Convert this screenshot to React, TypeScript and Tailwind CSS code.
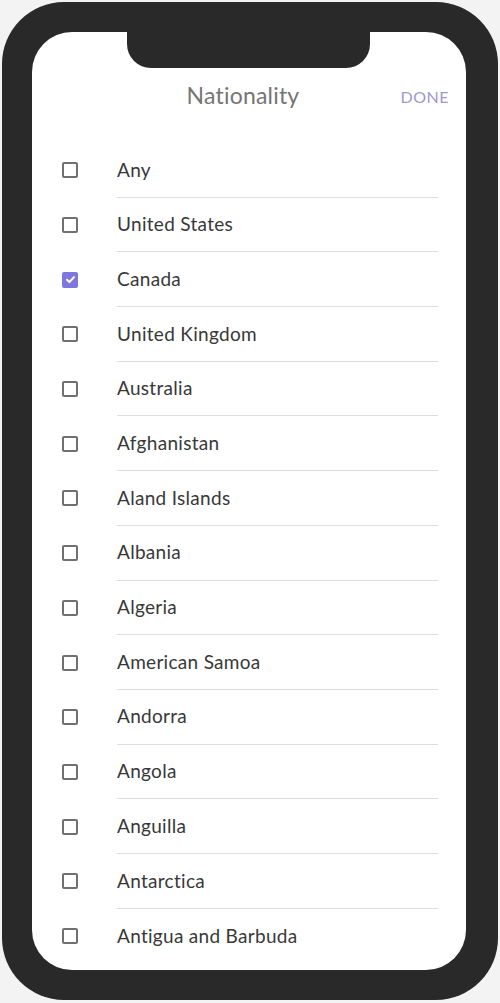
import React from "react";

const items = [
  "Any",
  "United States",
  "Canada",
  "United Kingdom",
  "Australia",
  "Afghanistan",
  "Aland Islands",
  "Albania",
  "Algeria",
  "American Samoa",
  "Andorra",
  "Angola",
  "Anguilla",
  "Antarctica",
  "Antigua and Barbuda",
];

function Box({ checked }: { checked: boolean }) {
  if (checked) {
    return (
      <div className="w-[16px] h-[16px] rounded-[2px] bg-[#7f78dc] flex items-center justify-center">
        <svg width="11" height="11" viewBox="0 0 12 12">
          <path d="M2.2 6.3 L4.8 8.8 L9.8 3.4" fill="none" stroke="white" strokeWidth="2.2" strokeLinecap="round" strokeLinejoin="round" />
        </svg>
      </div>
    );
  }
  return <div className="w-[16px] h-[16px] rounded-[2px] border-2 border-[#707070]" />;
}

export default function App() {
  return (
    <div className="w-[500px] h-[1003px] bg-[#f3f3f3] p-[2px]" style={{ fontFamily: "Lato, 'Open Sans', sans-serif" }}>
      <div className="w-[496px] h-[998px] bg-[#292929] rounded-[62px] pt-[30px] pl-[30px] pr-[32px] pb-[30px]">
        <div className="relative w-full h-full bg-white rounded-[40px] overflow-hidden">
          <div className="absolute top-0 left-[95px] w-[243px] h-[36px] bg-[#292929] rounded-b-[24px]" />
          <div className="h-[111px] relative">
            <div className="absolute left-0 right-[12px] top-[46px] flex justify-center text-[23px] text-[#757575] tracking-[0.2px]">Nationality</div>
            <div className="absolute right-[17px] top-[53px] text-[16px] text-[#9d98d2] tracking-[0.5px]">DONE</div>
          </div>
          <div className="flex flex-col">
            {items.map((name, i) => (
              <div key={name} className="flex h-[54.7px]">
                <div className="w-[85px] flex items-center pl-[30px]">
                  <Box checked={name === "Canada"} />
                </div>
                <div className={"flex-1 mr-[28px] flex items-center text-[19px] tracking-[0.3px] text-[#383838] " + (i < items.length - 1 ? "border-b border-[#dedede]" : "")}>
                  {name}
                </div>
              </div>
            ))}
          </div>
        </div>
      </div>
    </div>
  );
}
